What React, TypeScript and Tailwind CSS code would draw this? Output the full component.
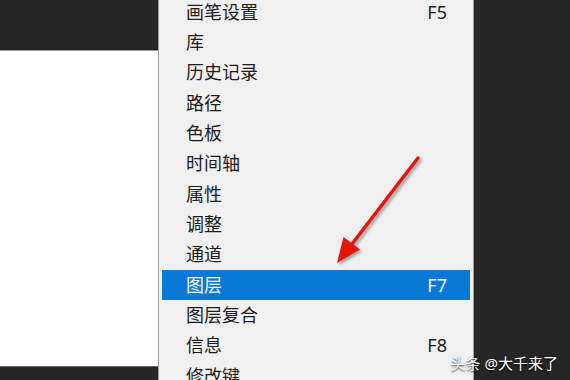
import React from 'react';

interface MenuItem {
  label: string;
  shortcut?: string;
  active?: boolean;
}

const items: MenuItem[] = [
  { label: '画笔设置', shortcut: 'F5' },
  { label: '库' },
  { label: '历史记录' },
  { label: '路径' },
  { label: '色板' },
  { label: '时间轴' },
  { label: '属性' },
  { label: '调整' },
  { label: '通道' },
  { label: '图层', shortcut: 'F7', active: true },
  { label: '图层复合' },
  { label: '信息', shortcut: 'F8' },
  { label: '修改键' },
];

const Arrow: React.FC = () => (
  <svg className="pointer-events-none absolute left-0 top-0" width="570" height="380" viewBox="0 0 570 380">
    <defs>
      <filter id="arrowShadow" x="-20%" y="-20%" width="140%" height="140%">
        <feDropShadow dx="2" dy="2" stdDeviation="1.5" floodColor="#000" floodOpacity="0.35" />
      </filter>
    </defs>
    <g filter="url(#arrowShadow)">
      <line x1="418" y1="158" x2="352" y2="244" stroke="#e3140f" strokeWidth="3.5" strokeLinecap="round" />
      <polygon points="337,263 343.5,237 360,249.5" fill="#e3140f" />
    </g>
  </svg>
);

export default function App() {
  return (
    <div
      className="relative flex h-[380px] w-[570px] overflow-hidden bg-[#262626]"
      style={{ fontFamily: '"Noto Sans", "Noto Sans CJK SC", sans-serif' }}
    >
      {/* canvas side */}
      <div className="flex w-[158px] flex-col">
        <div className="h-[50px] bg-[#262626]" />
        <div className="h-[316px] border-t border-[#9a9a9a] bg-white" />
        <div className="flex-1 border-t border-[#6a6a6a] bg-[#262626]" />
      </div>

      {/* window menu */}
      <div className="w-[316px] border-x border-[#a3a3a3] bg-[#f0f0f0] px-[3px]">
        <div className="-mt-[3px] flex flex-col">
          {items.map((item) => (
            <div
              key={item.label}
              className={`flex h-[30.33px] shrink-0 items-center justify-between pl-[24px] pr-[23px] text-[18px] ${
                item.active ? 'bg-[#0a78d6] text-[#f4f9ff]' : 'text-[#1c1c1c]'
              }`}
            >
              <span>{item.label}</span>
              {item.shortcut && <span>{item.shortcut}</span>}
            </div>
          ))}
        </div>
      </div>

      <div className="flex-1 bg-[#262626]" />

      <Arrow />

      <div className="absolute bottom-[9px] right-[12px] text-[15px] leading-none text-white [text-shadow:0_1px_2px_rgba(0,0,0,0.9)]">
        头条 @大千来了
      </div>
    </div>
  );
}
